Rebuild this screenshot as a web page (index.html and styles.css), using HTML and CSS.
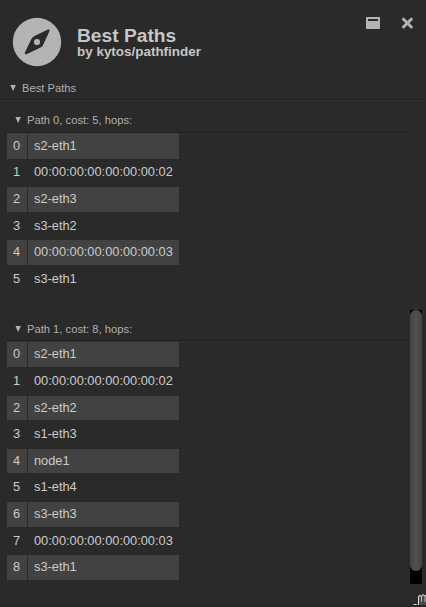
FILE: index.html
```
<!DOCTYPE html>
<html lang="en">
<head>
<meta charset="utf-8">
<title>Best Paths</title>
<link rel="stylesheet" href="styles.css">
</head>
<body>
<main class="panel">
  <header class="header">
    <svg class="compass" viewBox="0 0 50 50"><circle cx="25" cy="25" r="24.2" fill="#b4b4b4"/><path d="M36 12.5Q38.2 12 37.4 14.3L31.2 27.7Q30.5 29.6 28.6 30.5L15 37.1Q12 38 13 35.3L19.4 22Q20.2 20.2 22 19.3Z" fill="#2a2a2a"/><circle cx="25" cy="25" r="3.1" fill="#b4b4b4"/></svg>
    <div class="titles"><h1>Best Paths</h1><h2>by kytos/pathfinder</h2></div>
    <div class="actions">
      <svg width="14" height="12" viewBox="0 0 14 12"><path fill="#b4b4b4" fill-rule="evenodd" d="M1 0H13Q14 0 14 1V11Q14 12 13 12H1Q0 12 0 11V1Q0 0 1 0ZM2 2V4H12V2Z"/></svg>
      <svg width="12" height="12" viewBox="0 0 12 12"><path d="M2.5 2.2L10.3 10M10.3 2.2L2.5 10" stroke="#b4b4b4" stroke-width="3" stroke-linecap="round"/></svg>
    </div>
  </header>
  <div class="bar main-bar"><svg class="arrow" viewBox="0 0 6 6"><path d="M.4 0H5.8L3.1 6Z"/></svg>Best Paths</div>
  <section class="path">
    <div class="bar"><svg class="arrow" viewBox="0 0 6 6"><path d="M.4 0H5.8L3.1 6Z"/></svg>Path 0, cost: 5, hops:</div>
    <div class="hops">
      <div class="row first"><span>0</span><span>s2-eth1</span></div>
      <div class="row"><span>1</span><span>00:00:00:00:00:00:00:02</span></div>
      <div class="row"><span>2</span><span>s2-eth3</span></div>
      <div class="row"><span>3</span><span>s3-eth2</span></div>
      <div class="row"><span>4</span><span>00:00:00:00:00:00:00:03</span></div>
      <div class="row"><span>5</span><span>s3-eth1</span></div>
    </div>
  </section>
  <section class="path">
    <div class="bar next"><svg class="arrow" viewBox="0 0 6 6"><path d="M.4 0H5.8L3.1 6Z"/></svg>Path 1, cost: 8, hops:</div>
    <div class="hops">
      <div class="row"><span>0</span><span>s2-eth1</span></div>
      <div class="row"><span>1</span><span>00:00:00:00:00:00:00:02</span></div>
      <div class="row"><span>2</span><span>s2-eth2</span></div>
      <div class="row"><span>3</span><span>s1-eth3</span></div>
      <div class="row"><span>4</span><span>node1</span></div>
      <div class="row"><span>5</span><span>s1-eth4</span></div>
      <div class="row"><span>6</span><span>s3-eth3</span></div>
      <div class="row"><span>7</span><span>00:00:00:00:00:00:00:03</span></div>
      <div class="row"><span>8</span><span>s3-eth1</span></div>
    </div>
  </section>
  <div class="scroll"><div class="thumb"></div></div>
  <svg class="cursor" viewBox="0 0 15 13"><path d="M1.5 14V12.5Q1.5 10.5 4 10.5Q6 10.5 7.5 12V3Q7.5 1.5 9 1.5Q10 1.5 10.5 3Q10.5 .8 12 .8Q13.5 .8 14 2Q15 1 17 1.5V15Z" fill="#484848" stroke="#e4e4e4"/><path d="M10.5 3V8M14 2V8" stroke="#bbb"/></svg>
</main>
</body>
</html>
```

FILE: styles.css
```
* { box-sizing: border-box; }
body { margin: 0; background: #2a2a2a; color: #b0b0b0; font-family: "Liberation Sans", Arial, sans-serif; }
.panel { position: relative; width: 426px; height: 607px; overflow: hidden; border-bottom: 2px solid #292426; }
.header { display: flex; height: 77px; padding: 17px 12px 0; }
.compass { width: 50px; height: 50px; flex: none; }
.titles { margin: 9px 0 0 15px; flex: 1; color: #c6c6c6; }
h1, h2 { margin: 0; font-weight: bold; white-space: nowrap; }
h1 { font-size: 19.2px; line-height: 20px; }
h2 { font-size: 13.44px; line-height: 11px; }
.actions { display: flex; gap: 21px; margin-right: 1px; }
.bar { display: flex; align-items: center; height: 25px; padding-left: 8px; font-size: 11.2px; border-bottom: 1px solid #1f1f1f; box-shadow: 0 1px #333; }
.next { padding-top: 1px; }
.main-bar { height: 23px; margin: 0 5px 7.8px 2px; }
.arrow { width: 6px; height: 6px; margin-right: 6px; fill: #b4b4b4; }
.path { margin: 0 19px 25px 7px; }
.hops { position: relative; width: 172px; font-size: 12.8px; color: #ccc; }
.row { display: grid; grid-template-columns: 20px 151px; column-gap: 1px; height: 25.6px; margin-bottom: 1px; }
.row span { line-height: 25.6px; padding-left: 6px; }
.row:nth-child(odd) span { background: linear-gradient(transparent 1px, #424242 1px); }
.row.first span { height: 26px; background: #424242; }
.scroll { position: absolute; left: 410px; top: 310px; width: 12px; height: 274px; background: #000; }
.thumb { height: 261px; border-radius: 6px; background: linear-gradient(90deg, #444, #505050 50%, #444); }
.cursor { position: absolute; left: 411px; top: 594px; width: 15px; height: 13px; }
```
